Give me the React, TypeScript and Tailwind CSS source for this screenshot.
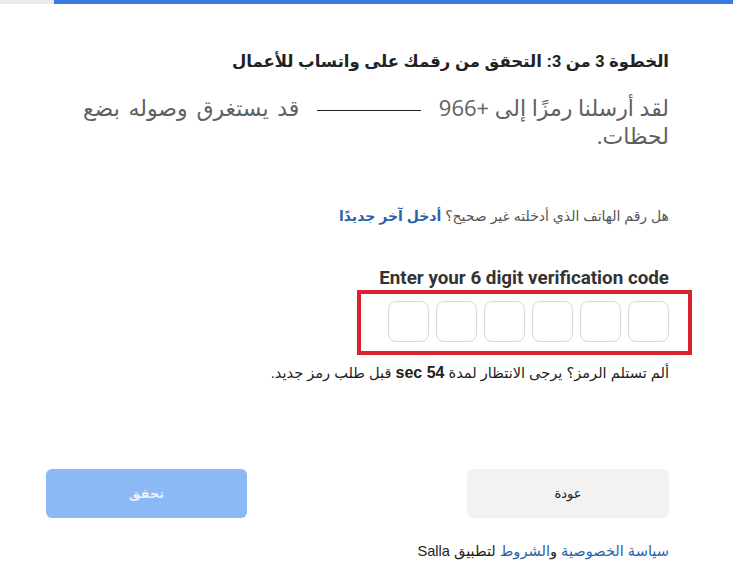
export default function App() {
  return (
    <div className="min-h-[572px] w-[733px] bg-white font-['Liberation_Sans','DejaVu_Sans',sans-serif]">
      {/* progress bar */}
      <div className="flex h-[4px] w-full">
        <div className="w-[54px] bg-[#e9ebee]"></div>
        <div className="flex-1 bg-[#3a7be0]"></div>
      </div>

      <div dir="rtl" className="pr-[64px] pl-[46px] pt-[46px] text-right">
        <h1 className="text-[16.5px] font-bold text-[#222] leading-[22px]">
          الخطوة 3 من 3: التحقق من رقمك على واتساب للأعمال
        </h1>

        <p className="mt-[21px] text-[22px] leading-[28px] text-[#606060] font-['Open_Sans','DejaVu_Sans',sans-serif]">
          لقد أرسلنا رمزًا إلى +966{' '}
          <span className="mx-[12px] inline-block h-px w-[104px] bg-[#222] align-middle"></span>
          {' '}<span className="[word-spacing:3px]">قد يستغرق وصوله بضع</span>
          <br />
          لحظات.
        </p>

        <p className="mt-[57px] text-[14px] leading-[20px] text-[#555]">
          هل رقم الهاتف الذي أدخلته غير صحيح؟{' '}
          <a className="font-bold text-[#2a63a8]">أدخل آخر جديدًا</a>
        </p>

        <div className="relative mt-[41px]">
          <p dir="ltr" className="text-right text-[18.8px] font-bold leading-[22px] text-[#333] font-['Roboto','Liberation_Sans',sans-serif]">
            Enter your 6 digit verification code
          </p>
          <div className="mt-[12px] flex gap-[7px]">
            {[0, 1, 2, 3, 4, 5].map((i) => (
              <input
                key={i}
                maxLength={1}
                className="h-[41px] w-[41px] rounded-[8px] border border-[#d9d9d9] bg-white text-center outline-none"
              />
            ))}
          </div>
          {/* highlight annotation */}
          <div className="pointer-events-none absolute right-[-23px] top-[23px] h-[65px] w-[335px] border-[4px] border-[#d9232e]"></div>
        </div>

        <p className="mt-[21px] text-[14.6px] leading-[20px] text-[#222]">
          ألم تستلم الرمز؟ يرجى الانتظار لمدة{' '}
          <span dir="ltr" className="text-[16px] font-bold">sec 54</span>{' '}
          قبل طلب رمز جديد.
        </p>

        <div className="mt-[86px] flex justify-between">
          <button className="h-[49px] w-[202px] rounded-[6px] bg-[#f2f2f2] text-[13px] text-[#222]">
            عودة
          </button>
          <button className="h-[49px] w-[201px] rounded-[6px] bg-[#8ab9f6] text-[13px] font-bold text-[#e8f1fd]">
            تحقق
          </button>
        </div>

        <p className="mt-[23px] text-[14.6px] leading-[20px] text-[#222]">
          <a className="text-[#2a63a8]">سياسة الخصوصية</a> و
          <a className="text-[#2a63a8]">الشروط</a> لتطبيق Salla
        </p>
      </div>
    </div>
  );
}
